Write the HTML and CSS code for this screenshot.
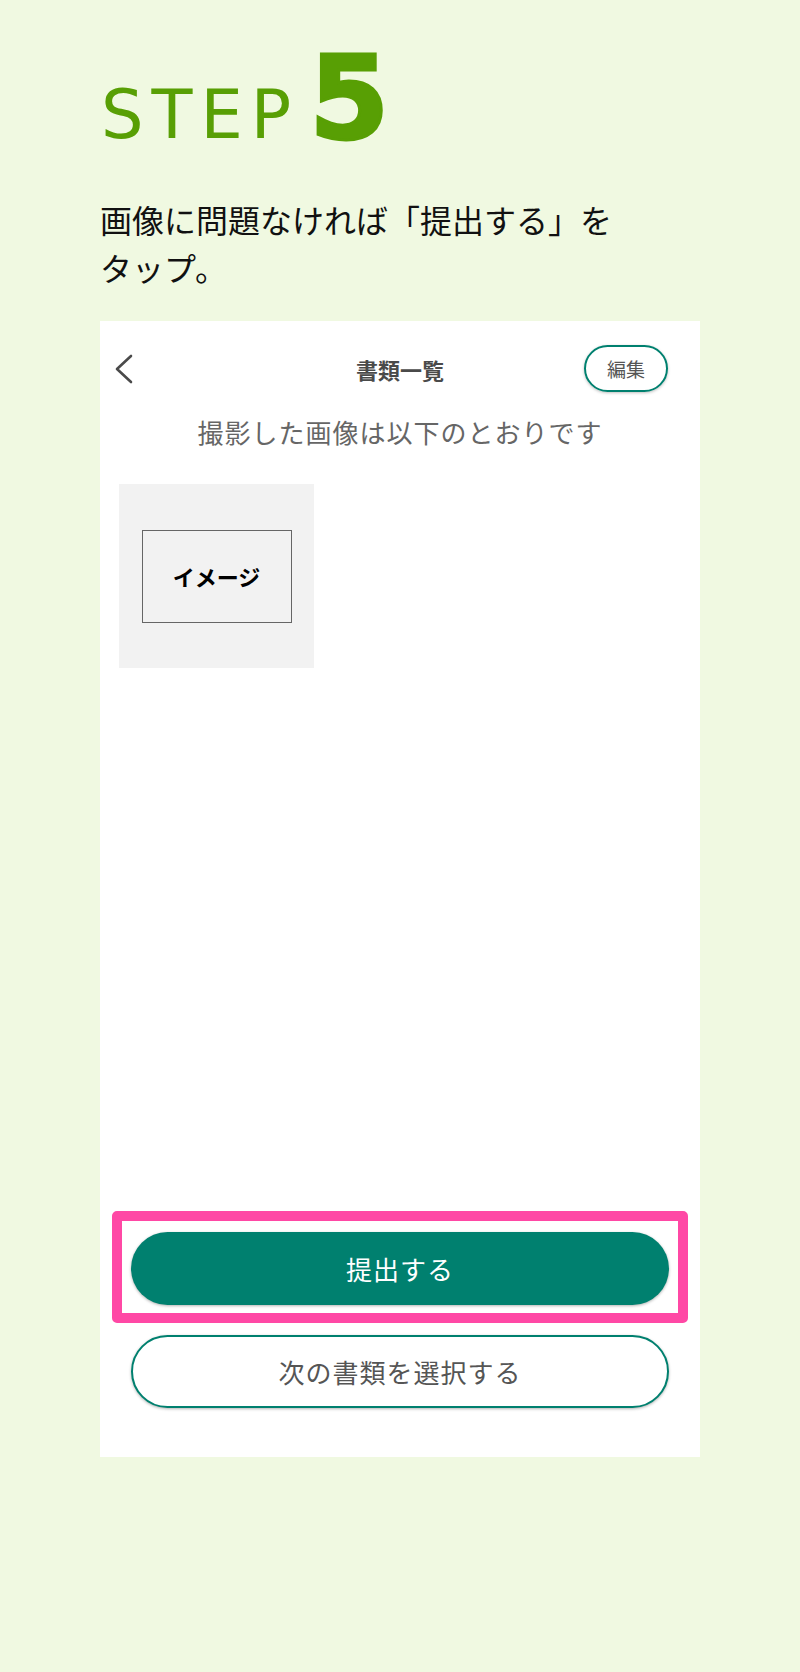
FILE: index.html
```html
<!doctype html>
<html lang="ja">
  <head>
    <meta charset="utf-8">
    <title>STEP 5</title>
    <link rel="stylesheet" href="styles.css">
  </head>
  <body>
    <div class="page">
      <h1 class="step"><span class="step-label">STEP</span><span class="step-num">5</span></h1>
      <p class="lead">画像に問題なければ「提出する」を<br>タップ。</p>

      <div class="phone">
        <div class="bar">
          <span class="back">
            <svg width="20" height="30" viewBox="0 0 20 30"><polyline points="17,2 3,15 17,28" fill="none" stroke="#4a4a4a" stroke-width="2.6" stroke-linecap="round" stroke-linejoin="round"/></svg>
          </span>
          <span class="bar-title">書類一覧</span>
          <span class="bar-right"><span class="edit">編集</span></span>
        </div>

        <p class="note">撮影した画像は以下のとおりです</p>

        <div class="thumb">
          <div class="thumb-box">イメージ</div>
        </div>

        <div class="bottom">
          <div class="mark">
            <div class="btn btn-main">提出する</div>
          </div>
          <div class="btn btn-sub">次の書類を選択する</div>
        </div>
      </div>
    </div>
  </body>
</html>
```

FILE: styles.css
```css
body {
  margin: 0;
  background: #f0f9e1;
  font-family: "Noto Sans CJK JP", "Noto Sans", sans-serif;
  color: #111;
}

.page {
  padding: 41px 100px 0;
}

.step {
  display: flex;
  align-items: baseline;
  margin: 0;
  height: 115px;
  line-height: 1;
  color: #589f04;
  font-family: "DejaVu Sans", sans-serif;
}

.step-label {
  font-size: 67px;
  font-weight: 400;
  letter-spacing: 8px;
  margin-left: 1px;
}

.step-num {
  font-size: 115px;
  font-weight: 700;
  margin-left: 10px;
  -webkit-text-stroke: 3px #589f04;
}

.lead {
  margin: 39px 0 0;
  font-size: 32px;
  line-height: 48px;
}

.phone {
  margin-top: 30px;
  width: 600px;
  height: 1136px;
  background: #fff;
  display: flex;
  flex-direction: column;
}

.bar {
  display: grid;
  grid-template-columns: 1fr auto 1fr;
  align-items: center;
  padding: 24px 32px 0;
  height: 47px;
}

.back {
  margin-left: -18px;
  display: flex;
}

.bar-title {
  font-size: 22px;
  font-weight: 700;
  color: #4a4a4a;
}

.bar-right {
  display: flex;
  justify-content: flex-end;
}

.edit {
  box-sizing: border-box;
  width: 84px;
  height: 47px;
  border: 2px solid #00806f;
  border-radius: 24px;
  box-shadow: 0 1px 3px rgba(0, 0, 0, .25);
  display: flex;
  align-items: center;
  justify-content: center;
  font-size: 19px;
  color: #555;
}

.note {
  margin: 22px 0 0;
  text-align: center;
  font-size: 26px;
  line-height: 36px;
  letter-spacing: 1px;
  color: #666;
}

.thumb {
  margin: 34px 0 0 19px;
  width: 195px;
  height: 184px;
  background: #f2f2f2;
  display: flex;
  align-items: center;
  justify-content: center;
}

.thumb-box {
  box-sizing: border-box;
  width: 150px;
  height: 93px;
  border: 1px solid #666;
  display: flex;
  align-items: center;
  justify-content: center;
  font-size: 22px;
  font-weight: 700;
  color: #000;
}

.bottom {
  margin-top: auto;
  padding: 0 12px 49px;
  display: flex;
  flex-direction: column;
  gap: 12px;
}

.mark {
  border: 10px solid #ff48a5;
  border-radius: 5px;
  padding: 11px 9px 8px;
}

.btn {
  box-sizing: border-box;
  height: 73px;
  border-radius: 37px;
  display: flex;
  align-items: center;
  justify-content: center;
  font-size: 26px;
  letter-spacing: 1px;
  box-shadow: 0 1px 3px rgba(0, 0, 0, .3);
}

.btn-main {
  background: #00806f;
  color: #fff;
}

.btn-sub {
  margin: 0 19px;
  background: #fff;
  border: 2px solid #00806f;
  color: #555;
}
```
